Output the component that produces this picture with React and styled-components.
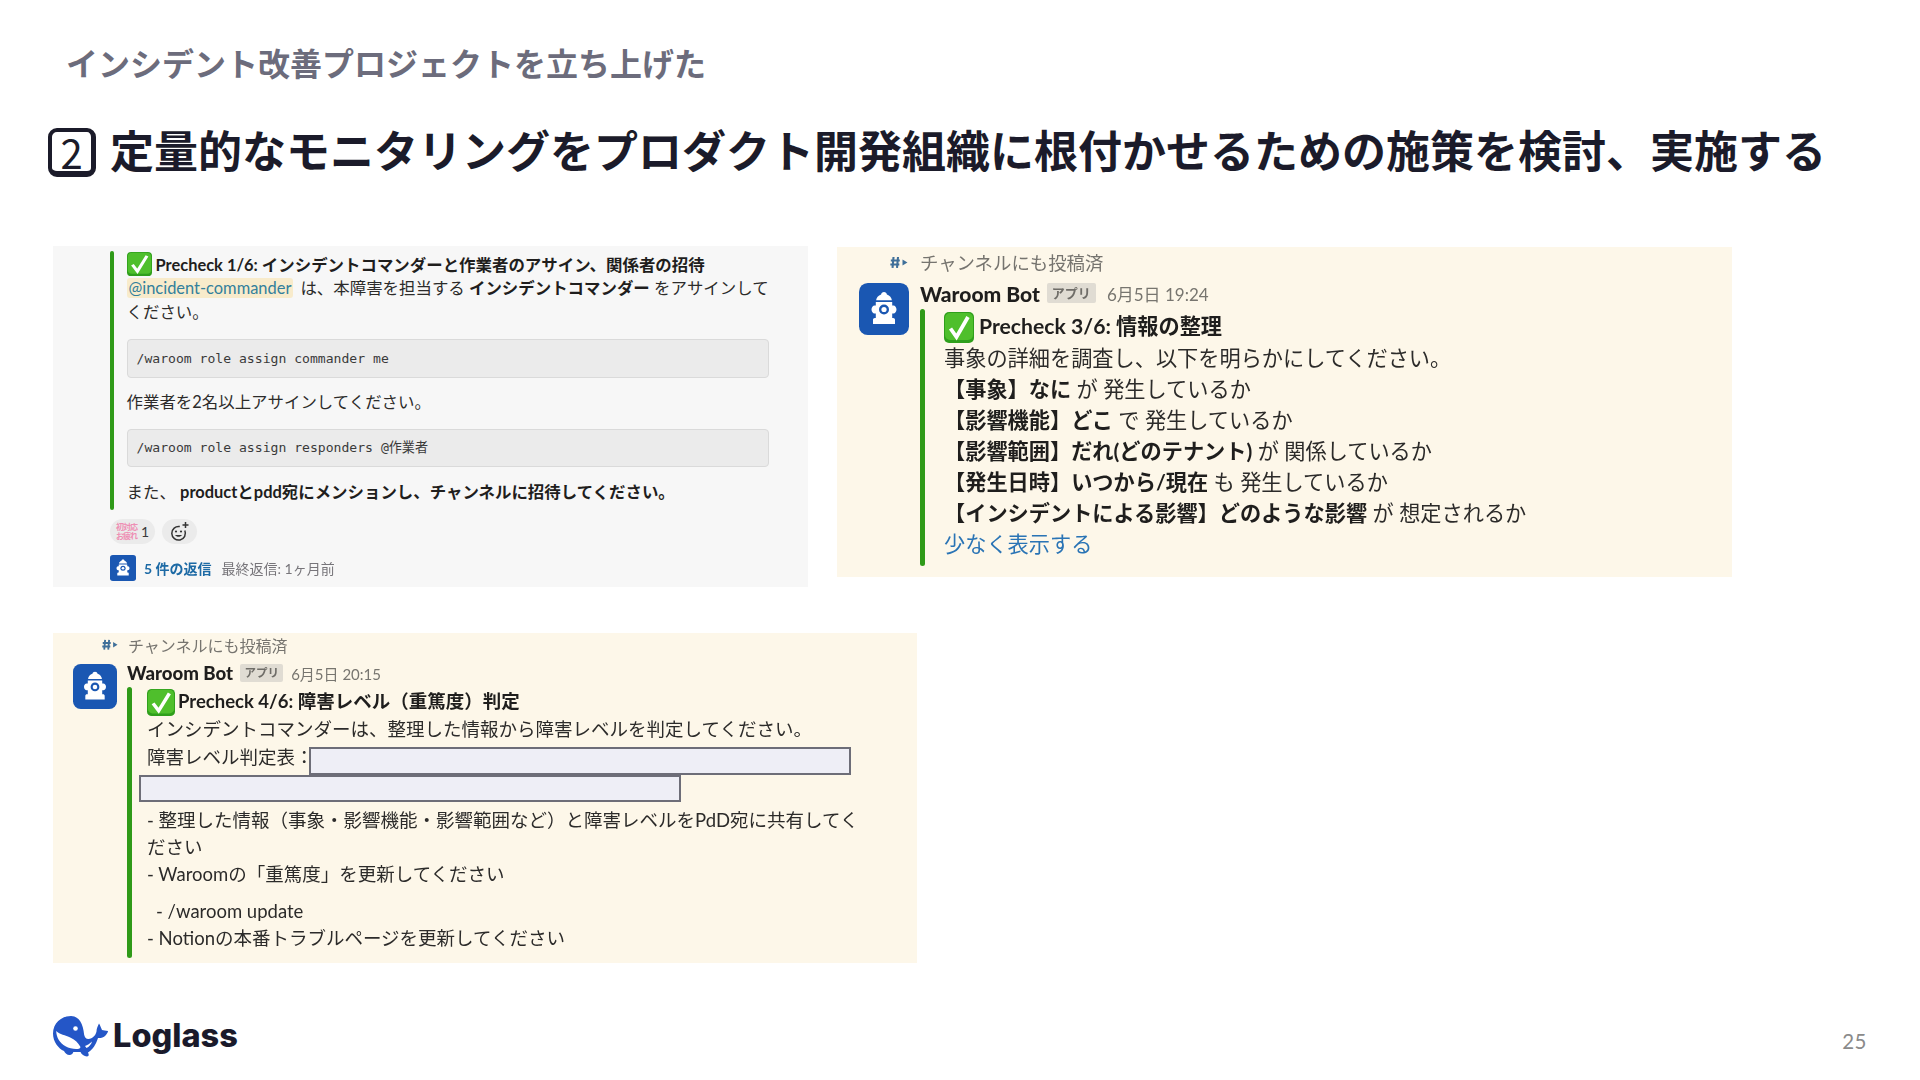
import styled, { createGlobalStyle } from "styled-components";

const GlobalStyle = createGlobalStyle`
    html, body {
        margin: 0;
        padding: 0;
        background: #ffffff;
    }
    body {
        font-family: Lato, "Noto Sans CJK JP", sans-serif;
    }
`;

const Slide = styled.div`
    width: 1920px;
    height: 1080px;
    padding-top: 39px;
    box-sizing: border-box;
    overflow: hidden;
    background: #ffffff;
`;

const Subtitle = styled.h2`
    margin: 0 0 0 66px;
    font-family: "Noto Sans CJK JP", sans-serif;
    font-size: 32px;
    line-height: 46px;
    font-weight: 700;
    color: #6c6c7c;
`;

const TitleRow = styled.div`
    display: flex;
    align-items: flex-start;
    gap: 14px;
    margin: 43px 0 0 48px;
`;

const NumberBox = styled.div`
    width: 48px;
    height: 49px;
    box-sizing: border-box;
    display: flex;
    align-items: center;
    justify-content: center;
    border: 4.5px solid #1b1b2a;
    border-bottom-width: 6.5px;
    border-right-width: 5.5px;
    border-radius: 9px;
    font-family: "Noto Sans CJK JP", sans-serif;
    font-size: 40px;
    font-weight: 400;
    line-height: 1;
    color: #1b1b2a;
`;

const Title = styled.h1`
    margin: -3px 0 0;
    font-family: "Noto Sans CJK JP", sans-serif;
    font-size: 44px;
    line-height: 49px;
    font-weight: 700;
    white-space: nowrap;
    color: #1b1b2a;
`;

const Shots = styled.div`
    margin: 69px 0 0 53px;
    display: grid;
    grid-template-columns: 755px 895px;
    column-gap: 29px;
    row-gap: 46px;
    filter: blur(0.35px);
`;

const Panel = styled.section`
    box-sizing: border-box;
    height: ${({ $height }) => $height}px;
    margin-top: ${({ $top }) => $top || 0}px;
    padding: ${({ $pad }) => $pad};
    background: ${({ $bg }) => $bg};
    color: #2c2b2a;
    font-size: ${({ $size }) => $size}px;
    white-space: nowrap;
    ${({ $wide }) => $wide && `width: ${$wide}px;`}
`;

const Attachment = styled.div`
    display: flex;
    gap: ${({ $gap }) => $gap}px;
    margin-top: ${({ $top }) => $top || 0}px;
`;

const Bar = styled.div`
    flex: none;
    width: ${({ $w }) => $w}px;
    border-radius: 3px;
    background: #2f9a18;
`;

const Body = styled.div`
    flex: 1;
    min-width: 0;
    padding: ${({ $pad }) => $pad};
`;

const Line = styled.div`
    height: ${({ $h }) => $h}px;
    line-height: ${({ $h }) => $h}px;
    margin-top: ${({ $top }) => $top || 0}px;
    margin-left: ${({ $indent }) => $indent || 0}px;
`;

const CheckLine = styled.div`
    display: flex;
    align-items: center;
    gap: ${({ $gap }) => $gap}px;
    height: ${({ $h }) => $h}px;
    font-weight: 700;
    color: #1f1e1d;
`;

const CheckTitle = styled.span`
    margin-top: ${({ $shift }) => $shift || 0}px;
`;

const Strong = styled.b`
    font-weight: 700;
    color: #1f1e1d;
`;

const Mention = styled.span`
    display: inline-block;
    height: 20px;
    line-height: 20px;
    padding: 0 2px;
    margin-right: 7px;
    border-radius: 3px;
    background: #f8ebcb;
    color: #33809c;
`;

const CodeBox = styled.div`
    height: ${({ $h }) => $h}px;
    line-height: ${({ $h }) => $h - 2}px;
    margin-top: ${({ $top }) => $top}px;
    padding-left: 9px;
    box-sizing: border-box;
    border: 1px solid #dadada;
    border-radius: 4px;
    background: #ebebeb;
    font-family: "DejaVu Sans Mono", "Noto Sans CJK JP", monospace;
    font-size: 13.1px;
    color: #3a3a3a;
`;

const Reactions = styled.div`
    display: flex;
    gap: 7px;
    margin-top: 9px;
`;

const Pill = styled.div`
    width: ${({ $w }) => $w}px;
    height: 25px;
    display: flex;
    align-items: center;
    justify-content: center;
    gap: 4px;
    border-radius: 13px;
    background: #ebebeb;
    font-size: 14px;
    color: #3a3a3a;
`;

const TinyStamp = styled.div`
    font-size: 8px;
    line-height: 9px;
    font-weight: 700;
    text-align: center;
    letter-spacing: -1px;
    color: #ee8fb4;
`;

const Thread = styled.div`
    display: flex;
    align-items: center;
    gap: 8px;
    margin-top: 11px;
    font-size: 14px;
`;

const ReplyCount = styled.span`
    font-weight: 700;
    color: #1d6aa5;
    margin-right: 2px;
`;

const ReplyMeta = styled.span`
    color: #77757a;
`;

const ChannelNote = styled.div`
    display: flex;
    align-items: center;
    gap: ${({ $gap }) => $gap}px;
    height: 24px;
    padding-left: ${({ $left }) => $left}px;
    font-size: ${({ $size }) => $size}px;
    color: #76746f;
`;

const Message = styled.div`
    display: flex;
    gap: ${({ $gap }) => $gap}px;
    margin-top: ${({ $top }) => $top}px;
    padding-left: ${({ $left }) => $left}px;
`;

const Content = styled.div`
    flex: 1;
    min-width: 0;
`;

const NameRow = styled.div`
    display: flex;
    align-items: center;
    height: ${({ $h }) => $h}px;
`;

const BotName = styled.span`
    font-size: ${({ $size }) => $size}px;
    font-weight: 900;
    color: #1f1e1d;
`;

const AppBadge = styled.span`
    height: ${({ $h }) => $h}px;
    line-height: ${({ $h }) => $h}px;
    width: ${({ $w }) => $w}px;
    margin: 0 ${({ $right }) => $right}px 0 ${({ $left }) => $left}px;
    border-radius: 2px;
    background: #e0dcd3;
    text-align: center;
    font-size: ${({ $size }) => $size}px;
    font-weight: 700;
    color: #6f6d68;
`;

const Time = styled.span`
    font-size: ${({ $size }) => $size}px;
    color: #77756f;
`;

const LinkText = styled.span`
    color: #2a74b5;
`;

const LevelRow = styled.div`
    display: flex;
    margin-top: 5px;
`;

const LevelLabel = styled.span`
    width: 162px;
    flex: none;
    line-height: 20px;
`;

const Redacted = styled.div`
    width: ${({ $w }) => $w}px;
    height: ${({ $h }) => $h}px;
    margin-left: ${({ $left }) => $left || 0}px;
    box-sizing: border-box;
    border: 2px solid #6d6d78;
    background: #eeeef6;
`;

const Footer = styled.footer`
    display: flex;
    align-items: flex-end;
    justify-content: space-between;
    margin-top: 52px;
    padding: 0 53px 0 52px;
    height: 42px;
`;

const Logo = styled.div`
    display: flex;
    align-items: center;
    gap: 4px;
`;

const LogoText = styled.span`
    font-family: Inter, sans-serif;
    font-size: 32.5px;
    line-height: 42px;
    font-weight: 800;
    color: #1a1a2b;
`;

const PageNumber = styled.span`
    font-size: 20.5px;
    line-height: 26px;
    letter-spacing: 0.5px;
    color: #8a8a8a;
    margin-bottom: 3px;
`;

const Avatar = ({ w, h, radius = 8 }) => (
    <svg
        width={w}
        height={h}
        viewBox="0 0 50 52"
        preserveAspectRatio="none"
        style={{ flex: "none" }}
    >
        <rect width="50" height="52" rx={radius * 1.1} fill="#1a57b2" />
        <path
            fill="#ffffff"
            d="M25 9c-1.600 0-2.700 1.100-2.900 2.400-2.900 1-4.700 3.300-5 5.800h15.800c-.3-2.500-2.100-4.800-5-5.800C27.700 10.100 26.600 9 25 9zM16.800 19v3.400h-1.300c-1.500 0-3 1.700-3 4s1.500 4 3 4h1.300V35h-1c-1 0-1.800.8-1.800 1.700V41h22v-4.300c0-.9-.8-1.700-1.800-1.700h-1v-4.600h1.300c1.500 0 3-1.700 3-4s-1.500-4-3-4h-1.300V19z"
        />
        <circle cx="25" cy="26.500" r="5" fill="#1a57b2" />
        <circle cx="25" cy="26.500" r="2.600" fill="#ffffff" />
    </svg>
);

const CheckEmoji = ({ w, h }) => (
    <svg
        width={w}
        height={h}
        viewBox="0 0 30 31"
        preserveAspectRatio="none"
        style={{ flex: "none" }}
    >
        <rect width="30" height="31" rx="5" fill="#2f9f1c" />
        <rect x="1" y="1" width="28" height="27" rx="5" fill="#4fbf2c" />
        <path
            d="M6.500 16.500 12.500 25 24 5"
            fill="none"
            stroke="#ffffff"
            strokeWidth="3.800"
        />
    </svg>
);

const ChannelIcon = ({ w }) => (
    <svg width={w} height={w * 0.72} viewBox="0 0 18 13">
        <path
            d="M3.500 1 2.500 12M8 1 7 12M.8 4.500h9M.3 8.500h9"
            fill="none"
            stroke="#3f6f99"
            strokeWidth="2.100"
        />
        <path d="M12.500 3.500 17.500 6.500 12.500 9.500z" fill="#3f6f99" />
    </svg>
);

const AddReaction = () => (
    <svg width="19" height="20" viewBox="0 0 19 20">
        <path
            d="M14.800 8.500a6.800 6.800 0 1 1-5-3.900"
            fill="none"
            stroke="#333333"
            strokeWidth="1.500"
        />
        <circle cx="6" cy="9.500" r="1.100" fill="#333333" />
        <circle cx="11" cy="9.500" r="1.100" fill="#333333" />
        <path d="M5 13c1.500 2.400 5.500 2.400 7 0z" fill="#333333" />
        <path
            d="M15.500 0v6M12.500 3h6"
            stroke="#333333"
            strokeWidth="1.500"
        />
    </svg>
);

const Whale = () => (
    <svg width="57" height="42" viewBox="0 0 57 42">
        <path
            fill="#2456c7"
            d="M19 1C9 1 1 8.500 1 18.500 1 27 6.500 33.500 12 36c1 2 3 4 5.500 4 2.200 0 3.300-1.400 3.800-3h7.200c1 2.500 3.500 4 6.500 4.500 2.500-.2 1.800-2.300 1-4 5-3 8-8.500 10-14.500 2.500.2 5.500-.3 7.500-2.500 1.500-1.600 2.500-3.500 2.500-4.500-2.500-.2-4.500-1-6-1-1-2.500-2-5-3-6.500-1.300 2.500-2.500 5.500-2.500 8-.7 3.500-4 7.500-8 7.500-2.700 0-3.900-2-4.400-4.500C31.300 9 27 1 19 1z"
        />
        <path
            fill="#ffffff"
            d="M4.200 16c.2 6.500 3.700 12.200 9.300 15.300 4 2.200 9.300 3.200 13.500 2.500 1.300-.3 1.700-1.200 1.200-2.200-2-3.800-5-6.800-9.500-8.900C13 20 8 19.500 4.200 16z"
        />
        <circle cx="23.500" cy="13.500" r="2.300" fill="#ffffff" />
        <path fill="#ffffff" d="M33 31c2-.5 5.500-2.800 7-4.500-.5 2.500-3 5.500-5.500 6.500z" />
    </svg>
);

const App = () => {
    return (
        <Slide>
            <GlobalStyle />
            <Subtitle>インシデント改善プロジェクトを立ち上げた</Subtitle>
            <TitleRow>
                <NumberBox>2</NumberBox>
                <Title>
                    定量的なモニタリングをプロダクト開発組織に根付かせるための施策を検討、実施する
                </Title>
            </TitleRow>

            <Shots>
                <Panel
                    $height={341}
                    $bg="#f7f7f7"
                    $size={16.45}
                    $pad="5px 39px 0 57px"
                >
                    <Attachment $gap={13}>
                        <Bar $w={3.5} />
                        <Body $pad="1px 0 6px">
                            <CheckLine $h={24} $gap={4}>
                                <CheckEmoji w={25} h={24} />
                                <span>
                                    Precheck 1/6:
                                    インシデントコマンダーと作業者のアサイン、関係者の招待
                                </span>
                            </CheckLine>
                            <Line $h={24}>
                                <Mention>@incident-commander</Mention>
                                は、本障害を担当する{" "}
                                <Strong>インシデントコマンダー</Strong>{" "}
                                をアサインして
                            </Line>
                            <Line $h={24}>ください。</Line>
                            <CodeBox $h={39} $top={15}>
                                /waroom role assign commander me
                            </CodeBox>
                            <Line $h={24} $top={12}>
                                作業者を2名以上アサインしてください。
                            </Line>
                            <CodeBox $h={38} $top={15}>
                                /waroom role assign responders @作業者
                            </CodeBox>
                            <Line $h={24} $top={13}>
                                また、{" "}
                                <Strong>
                                    productとpdd宛にメンションし、チャンネルに招待してください。
                                </Strong>
                            </Line>
                        </Body>
                    </Attachment>
                    <Reactions>
                        <Pill $w={45}>
                            <TinyStamp>
                                初対応
                                <br />
                                お疲れ
                            </TinyStamp>
                            1
                        </Pill>
                        <Pill $w={35}>
                            <AddReaction />
                        </Pill>
                    </Reactions>
                    <Thread>
                        <Avatar w={26} h={26} radius={5} />
                        <ReplyCount>5 件の返信</ReplyCount>
                        <ReplyMeta>最終返信: 1ヶ月前</ReplyMeta>
                    </Thread>
                </Panel>

                <Panel $height={330} $top={1} $bg="#fdf7e9" $size={21.2} $pad="3px 0 0">
                    <ChannelNote $left={53} $gap={12} $size={18.4}>
                        <ChannelIcon w={18} />
                        チャンネルにも投稿済
                    </ChannelNote>
                    <Message $top={9} $left={22} $gap={11}>
                        <Avatar w={50} h={52} />
                        <Content>
                            <NameRow $h={20}>
                                <BotName $size={21}>Waroom Bot</BotName>
                                <AppBadge
                                    $h={20}
                                    $w={49}
                                    $left={7}
                                    $right={11}
                                    $size={13}
                                >
                                    アプリ
                                </AppBadge>
                                <Time $size={17}>6月5日 19:24</Time>
                            </NameRow>
                            <Attachment $gap={19} $top={6}>
                                <Bar $w={5} />
                                <Body $pad="3px 0 6px">
                                    <CheckLine $h={31} $gap={5}>
                                        <CheckEmoji w={30} h={31} />
                                        <CheckTitle $shift={-6}>
                                            Precheck 3/6: 情報の整理
                                        </CheckTitle>
                                    </CheckLine>
                                    <Line $h={31}>
                                        事象の詳細を調査し、以下を明らかにしてください。
                                    </Line>
                                    <Line $h={31}>
                                        <Strong>【事象】なに</Strong> が 発生しているか
                                    </Line>
                                    <Line $h={31}>
                                        <Strong>【影響機能】どこ</Strong> で 発生しているか
                                    </Line>
                                    <Line $h={31}>
                                        <Strong>【影響範囲】だれ(どのテナント)</Strong> が 関係しているか
                                    </Line>
                                    <Line $h={31}>
                                        <Strong>【発生日時】いつから/現在</Strong> も 発生しているか
                                    </Line>
                                    <Line $h={31}>
                                        <Strong>【インシデントによる影響】どのような影響</Strong> が 想定されるか
                                    </Line>
                                    <Line $h={31}>
                                        <LinkText>少なく表示する</LinkText>
                                    </Line>
                                </Body>
                            </Attachment>
                        </Content>
                    </Message>
                </Panel>

                <Panel
                    $height={330}
                    $wide={864}
                    $bg="#fdf7e9"
                    $size={18.5}
                    $pad="0 0 0"
                >
                    <ChannelNote $left={49} $gap={10} $size={16}>
                        <ChannelIcon w={16} />
                        チャンネルにも投稿済
                    </ChannelNote>
                    <Message $top={7} $left={20} $gap={10}>
                        <Avatar w={44} h={45} />
                        <Content>
                            <NameRow $h={18}>
                                <BotName $size={18.6}>Waroom Bot</BotName>
                                <AppBadge
                                    $h={18}
                                    $w={43}
                                    $left={7}
                                    $right={8}
                                    $size={11.5}
                                >
                                    アプリ
                                </AppBadge>
                                <Time $size={15}>6月5日 20:15</Time>
                            </NameRow>
                            <Attachment $gap={15.5} $top={5}>
                                <Bar $w={4.5} />
                                <Body $pad="2px 0 7px">
                                    <CheckLine $h={27} $gap={3}>
                                        <CheckEmoji w={28} h={27} />
                                        <CheckTitle $shift={-5}>
                                            Precheck 4/6: 障害レベル（重篤度）判定
                                        </CheckTitle>
                                    </CheckLine>
                                    <Line $h={26}>
                                        インシデントコマンダーは、整理した情報から障害レベルを判定してください。
                                    </Line>
                                    <LevelRow>
                                        <LevelLabel>障害レベル判定表：</LevelLabel>
                                        <Redacted $w={542} $h={28} />
                                    </LevelRow>
                                    <Redacted $w={542} $h={27} $left={-8} />
                                    <Line $h={26} $top={5}>
                                        - 整理した情報（事象・影響機能・影響範囲など）と障害レベルをPdD宛に共有してく
                                    </Line>
                                    <Line $h={26} $top={1}>ださい</Line>
                                    <Line $h={26} $top={1}>
                                        - Waroomの「重篤度」を更新してください
                                    </Line>
                                    <Line $h={26} $top={11} $indent={9}>
                                        - /waroom update
                                    </Line>
                                    <Line $h={26} $top={1}>
                                        - Notionの本番トラブルページを更新してください
                                    </Line>
                                </Body>
                            </Attachment>
                        </Content>
                    </Message>
                </Panel>
            </Shots>

            <Footer>
                <Logo>
                    <Whale />
                    <LogoText>Loglass</LogoText>
                </Logo>
                <PageNumber>25</PageNumber>
            </Footer>
        </Slide>
    );
};

export default App;
